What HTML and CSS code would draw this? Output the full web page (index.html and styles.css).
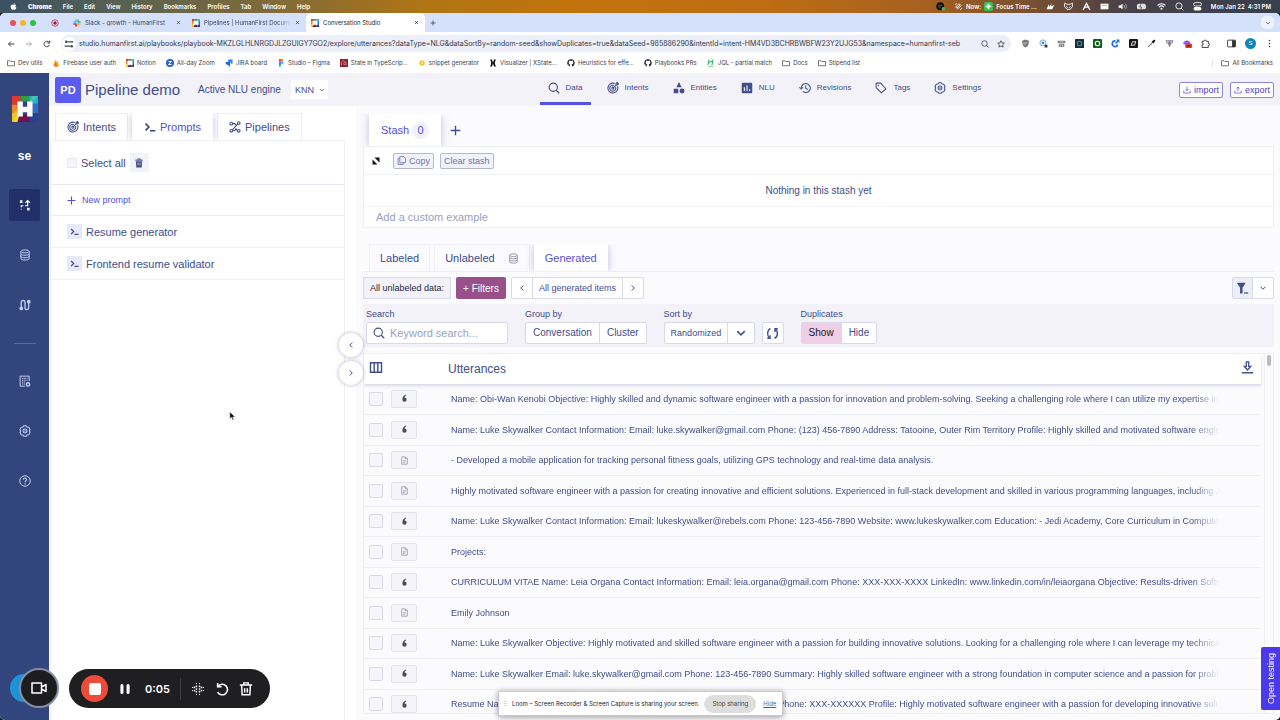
FILE: index.html
```html
<!DOCTYPE html>
<html lang="en">
<head>
  <meta charset="UTF-8" />
  <meta name="viewport" content="width=device-width, initial-scale=1.0" />
  <title>Conversation Studio</title>
  <link rel="stylesheet" href="styles.css">
</head>
<body>
  <!-- shared icons -->
  <svg class="sprite" aria-hidden="true">
    <symbol id="i-target" viewBox="0 0 16 16"><g fill="none" stroke="currentColor" stroke-width="1.4"><path d="M14 5.6A6.6 6.6 0 1 1 10.4 2"/><path d="M11.3 6.6A4 4 0 1 1 9.2 4.6"/><circle cx="7.8" cy="8.2" r="1.4"/><path d="M7.8 8.2 12 4V2l2-1.6V2.200h1.800L14 4h-2"/></g></symbol>
    <symbol id="i-prompt" viewBox="0 0 16 16"><path d="M2 3.500 6.500 8 2 12.500M8 13h7" fill="none" stroke="currentColor" stroke-width="2.200"/></symbol>
    <symbol id="i-pipe" viewBox="0 0 16 16"><g fill="none" stroke="currentColor" stroke-width="1.400"><circle cx="3" cy="3.500" r="1.800"/><circle cx="13" cy="2.800" r="1.800"/><circle cx="3" cy="13" r="1.800"/><circle cx="13" cy="13" r="1.800"/><path d="M4.800 3.500h2.700c1.500 0 1 2 2 2M11.700 4.200 4.300 11.700M4.800 13h2.400c1.500 0 .8-2.500 2.300-2.500.8 0 1 2.500 1.700 2.500"/></g></symbol>
    <symbol id="i-trash" viewBox="0 0 16 16"><path d="M2 3.500h12M6 3V1.500h4V3" fill="none" stroke="currentColor" stroke-width="1.600"/><path d="M3 5h10l-.7 10H3.700z" fill="currentColor"/><path d="M6 7.500v4M8 7.500v4M10 7.500v4" stroke="#eef" stroke-width=".8"/></symbol>
    <symbol id="i-plus" viewBox="0 0 16 16"><path d="M8 1v14M1 8h14" stroke="currentColor" stroke-width="2"/></symbol>
    <symbol id="i-search" viewBox="0 0 16 16"><path d="M15 15l-4-4" stroke="currentColor" stroke-width="1.700"/><circle cx="7" cy="7" r="5.500" fill="none" stroke="currentColor" stroke-width="1.500"/></symbol>
    <symbol id="i-shapes" viewBox="0 0 16 16"><path d="M8 0l3.500 7h-7zM1 9h6v6H1z" fill="currentColor"/><circle cx="12" cy="12" r="3.300" fill="currentColor"/></symbol>
    <symbol id="i-chart" viewBox="0 0 16 16"><rect x="1" y="1" width="14" height="14" rx="1.500" fill="currentColor"/><path d="M4.500 12V7M8 12V4.500M11.500 12V9.500" stroke="#f3f3f9" stroke-width="1.500"/></symbol>
    <symbol id="i-history" viewBox="0 0 16 16"><path d="M3 8a6 6 0 1 1 2 4.500M.5 7 3 9.500 5.500 7M9 4.500V8.500l2.700 1.600" fill="none" stroke="currentColor" stroke-width="1.400"/></symbol>
    <symbol id="i-tag" viewBox="0 0 16 16"><path d="M1.500 2v5.500l7 7 6-5.500-7-7.500H2z" fill="none" stroke="currentColor" stroke-width="1.400" stroke-linejoin="round"/><circle cx="4.500" cy="4.500" r="1" fill="currentColor"/></symbol>
    <symbol id="i-gear" viewBox="0 0 16 16"><g fill="none" stroke="currentColor" stroke-width="1.400"><path d="M6.300 1h3.400l1 1.800 2.300.2 1.700 2.900L13.700 8l1 2.100L13 13l-2.300.2-1 1.800H6.300l-1-1.800L3 13l-1.700-2.900L2.300 8l-1-2.100L3 3l2.300-.2z" stroke-linejoin="round"/><circle cx="8" cy="8" r="2.600"/></g><circle cx="8" cy="8" r="1" fill="currentColor"/></symbol>
    <symbol id="i-down" viewBox="0 0 16 16"><path d="M8 1v8M5 6.500 8 9.500l3-3M1.500 9v5h13V9" fill="none" stroke="currentColor" stroke-width="1.300"/></symbol>
    <symbol id="i-up" viewBox="0 0 16 16"><path d="M8 10V2M5 5l3-3 3 3M1.500 9v5h13V9" fill="none" stroke="currentColor" stroke-width="1.300"/></symbol>
    <symbol id="i-db" viewBox="0 0 16 16"><g fill="none" stroke="currentColor" stroke-width="1.300"><ellipse cx="8" cy="3.200" rx="5.500" ry="2"/><path d="M2.500 3.200v9.600c0 2.600 11 2.600 11 0V3.200M2.500 6.500c0 2.500 11 2.500 11 0M2.500 9.800c0 2.500 11 2.500 11 0"/></g></symbol>
    <symbol id="i-chev-d" viewBox="0 0 16 16"><path d="M3 5.500 8 10.500l5-5" fill="none" stroke="currentColor" stroke-width="2"/></symbol>
    <symbol id="i-chev-l" viewBox="0 0 16 16"><path d="M10.500 3l-5 5 5 5" fill="none" stroke="currentColor" stroke-width="2"/></symbol>
    <symbol id="i-chev-r" viewBox="0 0 16 16"><path d="M5.500 3l5 5-5 5" fill="none" stroke="currentColor" stroke-width="2"/></symbol>
    <symbol id="i-folder" viewBox="0 0 16 16"><path d="M1 3.500h5l1.500 1.500H15v8.500H1z" fill="none" stroke="currentColor" stroke-width="1.400" stroke-linejoin="round"/></symbol>
    <symbol id="i-x" viewBox="0 0 16 16"><path d="M3 3l10 10M13 3 3 13" stroke="currentColor" stroke-width="2.200"/></symbol>
    <symbol id="i-git" viewBox="0 0 16 16"><path d="M8 .5a7.500 7.500 0 0 0-2.400 14.600c.4 0 .5-.2.500-.4v-2C4 13 3.500 11.800 3.300 11.400 3 11 2.600 10.700 2.500 10.500c1.200-.3 1.600 1.200 2.300 1.400.6.200 1.200 0 1.400-.1 0-.5.300-.8.500-1-2-.2-3.400-1-3.400-3.600 0-.8.300-1.500.8-2-.1-.3-.3-1.200.1-2 0 0 .7-.2 2 .8 1.300-.4 2.500-.4 3.700 0 1.300-1 2-.8 2-.8.400.8.200 1.700.1 2 .5.500.8 1.200.8 2 0 2.600-1.500 3.400-3.400 3.600.3.300.6.800.6 1.500v2.300c0 .2.100.500.500.4A7.500 7.500 0 0 0 8 .5z" fill="#1b1b20"/></symbol>
    <symbol id="i-quote" viewBox="0 0 16 16"><path d="M10.500 1C7 2 4.200 5.500 4.200 10a3.800 3.800 0 1 0 4-3.800C8.300 4.500 9.300 3 11.200 2.200z" fill="#4a4d5e"/></symbol>
    <symbol id="i-doc" viewBox="0 0 16 16"><path d="M3 1.500h6.500l3.500 3.500v9.500H3zM9.500 1.500V5H13M5.300 8.500h5.400M5.300 11.300h3.700" fill="none" stroke="#8a8da0" stroke-width="1.300"/></symbol>
    <symbol id="i-hf" viewBox="0 0 24 24"><path d="M0 0h8v8H0z" fill="#e03a2f"/><path d="M8 0h8v5H8z" fill="#2f9e48"/><path d="M16 0h8v8h-5v-3h-3z" fill="#1db3dc"/><path d="M24 0l-5 5h-3l3-5z" fill="#4cc3a5"/><path d="M0 8h5v8H0z" fill="#f08a24"/><path d="M19 7h5v9h-5z" fill="#2e6fc9"/><path d="M0 16h8v8H0z" fill="#f6d32d"/><path d="M7 17h10v7H5z" fill="#6d1450"/><path d="M16 16h8v8h-7z" fill="#2a3f8f"/><path d="M0 24 5 17 4 13l-4 5z" fill="#e9c52e"/><path d="M5 5h5v5h4V5h5v14h-5v-4h-4v4H5z" fill="#fff"/></symbol>
  </svg>

  <header class="menubar">
    <svg class="apple" viewBox="0 0 16 16"><path d="M11 0c0 2-1.500 3.500-3 3.500C8 1.800 9.500.300 11 0zM8 4.500c.8 0 1.700-1 3.300-1 1 0 2 .5 2.700 1.500-2.500 1.500-2 5 .6 6-.8 2.300-2 4.500-3.600 4.500-1 0-1.400-.7-2.700-.7s-1.700.7-2.700.7C3.500 15.500 1.500 12 1.500 8.700c0-3.300 2-5.200 4-5.200 1.200 0 2 1 2.500 1z" fill="#fff"/></svg>
    <strong>Chrome</strong><span>File</span><span>Edit</span><span>View</span><span>History</span><span>Bookmarks</span><span>Profiles</span><span>Tab</span><span>Window</span><span>Help</span>
    <div class="menu-right">
      <svg viewBox="0 0 16 16"><circle cx="7.500" cy="7.500" r="7" fill="#111"/><path d="M4 6h7M4 9h5" stroke="#888"/><circle cx="13" cy="12" r="3" fill="#35c759"/></svg>
      <span class="now"><svg viewBox="0 0 16 16"><path d="M3 9 9 3l2 2-6 6zM6 13l7-7M2 5l3-3M11 14l3-3" fill="none" stroke="#fff" stroke-width="1.600"/></svg> Now: <svg viewBox="0 0 16 16"><rect width="16" height="16" rx="3" fill="#2fc44b"/><path d="M8 3v10M3 8h10" stroke="#fff" stroke-width="3"/></svg> Focus Time ...</span>
      <svg viewBox="0 0 16 16"><path d="M1 13 5 4l1 5 4-7-1 6 6-3-4 8z" fill="#fff"/></svg>
      <svg viewBox="0 0 16 16"><path d="M1 2l4 2h6l4-2v6l-4 5H5L1 8zM4 8l3 2M12 8l-3 2" fill="none" stroke="#fff" stroke-width="1.500"/></svg>
      <svg viewBox="0 0 16 16"><path d="M2 14 8 2l6 12M5 9h8" fill="none" stroke="#fff" stroke-width="2"/></svg>
      <svg viewBox="0 0 16 16"><path d="M1 3h14v10H1z" fill="#fff"/><path d="M3 6h10" stroke="#966"/></svg>
      <svg viewBox="0 0 16 16"><path d="M1 6h3l4-3v10l-4-3H1z" fill="#fff"/><path d="M10 5c1.500 2 1.500 4 0 6M13 3c2.500 3 2.500 7 0 10" fill="none" stroke="#ccc" stroke-width="1.300"/></svg>
      <svg class="wide" viewBox="0 0 20 16"><rect x="1" y="3" width="16" height="10" rx="3" fill="#ddd"/><path d="M8 4l-2 5h3l-1 4M19 6v4" fill="none" stroke="#555" stroke-width="1.500"/></svg>
      <svg viewBox="0 0 16 16"><path d="M1 6c4-4 10-4 14 0M3.500 9c3-3 6-3 9 0" fill="none" stroke="#fff" stroke-width="2"/><circle cx="8" cy="12" r="1.800" fill="#fff"/></svg>
      <svg><use href="#i-search"/></svg>
      <svg viewBox="0 0 16 16"><rect x="1" y="1" width="14" height="6" rx="3" fill="none" stroke="#fff" stroke-width="1.500"/><rect x="1" y="9" width="14" height="6" rx="3" fill="#fff"/></svg>
      <span>Mon Jan 22&nbsp; 4:31 PM</span>
    </div>
  </header>

  <div class="browser">
    <div class="tabstrip">
      <div class="lights"><i></i><i></i><i></i></div>
      <svg class="ico rec" viewBox="0 0 16 16"><circle cx="8" cy="8" r="6.500" fill="#f6d9e4" stroke="#a03060" stroke-width="1.500"/><circle cx="8" cy="8" r="3.500" fill="#a01f4a"/></svg>
      <div class="tab">
        <svg class="ico" viewBox="0 0 16 16"><g stroke-width="3" stroke-linecap="round"><path d="M6 2v4M2 6h4" stroke="#36c5f0"/><path d="M10 2v4M10 6h4" stroke="#2eb67d"/><path d="M10 10v4M10 10h4" stroke="#ecb22e"/><path d="M2 10h4M6 10v4" stroke="#e01e5a"/></g></svg>
        <span>Slack - growth - HumanFirst</span>
        <button class="plain" aria-label="Close tab"><svg><use href="#i-x"/></svg></button>
      </div>
      <div class="tab">
        <svg class="ico"><use href="#i-hf"/></svg>
        <span class="fade">Pipelines | HumanFirst Documentation</span>
        <button class="plain" aria-label="Close tab"><svg><use href="#i-x"/></svg></button>
      </div>
      <div class="tab active">
        <svg class="ico"><use href="#i-hf"/></svg>
        <span>Conversation Studio</span>
        <button class="plain" aria-label="Close tab"><svg><use href="#i-x"/></svg></button>
      </div>
      <button class="plain newtab" aria-label="New tab"><svg><use href="#i-plus"/></svg></button>
      <button class="plain tabsearch" aria-label="Search tabs"><svg><use href="#i-chev-d"/></svg></button>
    </div>

    <div class="toolbar">
      <button class="plain" aria-label="Back"><svg viewBox="0 0 16 16"><path d="M15 8H3M8 3 3 8l5 5" fill="none" stroke="#444" stroke-width="2"/></svg></button>
      <button class="plain" aria-label="Forward"><svg viewBox="0 0 16 16"><path d="M1 8h12M8 3l5 5-5 5" fill="none" stroke="#aaa" stroke-width="2"/></svg></button>
      <button class="plain" aria-label="Reload"><svg viewBox="0 0 16 16"><path d="M13 9.500A5.500 5.500 0 1 1 12 4.500M13.500 1v5h-5" fill="none" stroke="#444" stroke-width="2"/></svg></button>
      <div class="address">
        <svg class="site" viewBox="0 0 16 16"><circle cx="8" cy="8" r="8" fill="#fff"/><path d="M7 5.500h6M3 10.500h6" stroke="#444" stroke-width="1.500"/><circle cx="5" cy="5.500" r="1.500" fill="#444"/><circle cx="11" cy="10.500" r="1.500" fill="#444"/></svg>
        <input type="text" aria-label="Address" value="studio.humanfirst.ai/playbooks/playbook-MKZLGLHLNRGDJLZGUIGY7GO2/explore/utterances?dataType=NLG&amp;dataSortBy=random-seed&amp;showDuplicates=true&amp;dataSeed=985886290&amp;intentId=intent-HM4VD3BCHRBWBFW23Y2UJG53&amp;namespace=humanfirst-seb">
        <svg><use href="#i-search"/></svg>
        <svg viewBox="0 0 16 16"><path d="M8 1.500l2 4.300 4.700.5-3.500 3.200 1 4.700L8 11.800l-4.200 2.400 1-4.700L1.300 6.300 6 5.800z" fill="none" stroke="#333" stroke-width="1.500"/></svg>
      </div>
      <div class="extensions">
        <svg viewBox="0 0 16 16"><path d="M8 1l6 2c0 6-1 10-6 12C3 13 2 9 2 3z" fill="#777"/><path d="M5 6v3h3V6h3" fill="none" stroke="#ddd"/></svg>
        <svg viewBox="0 0 16 16"><circle cx="7" cy="7" r="5.500" fill="#d7ecf7" stroke="#88a8c0" stroke-width="1.500"/><circle cx="7" cy="7" r="2" fill="#2e86c1"/><path d="M10 10h5v5h-5z" fill="#333a55"/></svg>
        <svg viewBox="0 0 16 16"><path d="M1 3h14v4H1zM3 8h10v6H3z" fill="#888"/><path d="M6 3v11M10 3v11" stroke="#ccc"/></svg>
        <svg viewBox="0 0 16 16"><rect width="16" height="16" rx="1" fill="#1d2833"/><circle cx="8" cy="8" r="4" fill="none" stroke="#16a6a8" stroke-width="2"/></svg>
        <svg viewBox="0 0 16 16"><rect width="16" height="16" rx="2" fill="#0d5c1c"/><circle cx="8" cy="8" r="4" fill="none" stroke="#fff" stroke-width="2"/></svg>
        <svg viewBox="0 0 16 16"><path d="M12 10A5 5 0 1 1 8 3.500" fill="none" stroke="#1473e6" stroke-width="3"/><path d="M9 1h6v6l-2-2-4 4-2-2 4-4z" fill="#1473e6"/></svg>
        <svg viewBox="0 0 16 16"><rect width="16" height="16" rx="2" fill="#16161a"/><path d="M4 12l2-7h6M12 4l-2 7H4" fill="none" stroke="#fff" stroke-width="1.500"/></svg>
        <svg viewBox="0 0 16 16"><path d="M2 14 9 7" stroke="#777" stroke-width="2"/><path d="M8 5l5-4 2 2-4 5z" fill="#111"/></svg>
        <svg viewBox="0 0 16 16"><path d="M1 2h14l-2 6H3zM5 8h6l-3 7z" fill="#8b7a9c"/><circle cx="5" cy="5" r="1.500" fill="#ddd"/><circle cx="11" cy="5" r="1.500" fill="#ddd"/></svg>
        <svg viewBox="0 0 16 16"><path d="M0 9a7 7 0 0 1 13-3l-3 5z" fill="#8b5cf6"/><rect x="4" y="8" width="12" height="8" rx="2" fill="#d63a31"/><path d="M7 12h6" stroke="#611" stroke-width="2"/></svg>
        <svg viewBox="0 0 16 16"><path d="M2 4h3.500a2 2 0 1 1 4 0H13v3.500a2 2 0 1 1 0 4V15H2v-4a2 2 0 0 0 0-4z" fill="none" stroke="#333" stroke-width="1.600"/></svg>
        <svg class="ml" viewBox="0 0 16 16"><rect x="1" y="2" width="14" height="12" rx="1" fill="none" stroke="#333" stroke-width="1.600"/><path d="M9 2h6v12H9z" fill="#333"/></svg>
        <span class="avatar">S</span>
        <svg viewBox="0 0 16 16"><g fill="#333"><circle cx="8" cy="2.500" r="1.300"/><circle cx="8" cy="8" r="1.300"/><circle cx="8" cy="13.500" r="1.300"/></g></svg>
      </div>
    </div>

    <nav class="bookmarks" aria-label="Bookmarks">
      <a href="#"><svg><use href="#i-folder"/></svg>Dev utils</a>
      <a href="#"><svg viewBox="0 0 16 16"><path d="M3 13 6 1l3 5 2-3 3 10-6 3z" fill="#f7a91b"/><path d="M3 13l4-6 4 8-3 1z" fill="#f4731c"/></svg>Firebase user auth</a>
      <a href="#"><svg><use href="#i-hf"/></svg>Notion</a>
      <a href="#"><svg viewBox="0 0 16 16"><circle cx="8" cy="8" r="8" fill="#2463d8"/><path d="M5 5h6l-6 6h6" fill="none" stroke="#fff" stroke-width="2"/></svg>All-day Zoom</a>
      <a href="#"><svg viewBox="0 0 16 16"><path d="M6 1h9v9c-2 0-3-1-3-3H9c-2 0-3-1-3-6z" fill="#2684ff"/><path d="M1 6h9v9c-2 0-3-1-3-3-5 0-6-3-6-6z" fill="#1868db"/></svg>JIRA board</a>
      <a href="#"><svg viewBox="0 0 16 16"><path d="M4 0h4v5H4z" fill="#f24e1e"/><path d="M8 0h4v5H8z" fill="#ff7262"/><path d="M4 5h4v5H4z" fill="#a259ff"/><circle cx="10.500" cy="7.500" r="2.500" fill="#1abcfe"/><path d="M4 10h4v3a2.500 2.500 0 0 1-4 2z" fill="#0acf83"/></svg>Studio – Figma</a>
      <a href="#"><svg viewBox="0 0 16 16"><rect width="16" height="16" fill="#8d1f2b"/><path d="M3 13V6l4-3 5 4v6M6 8h4M7 11h3" fill="none" stroke="#e5a3a3" stroke-width="1.500"/></svg>State in TypeScrip...</a>
      <a href="#"><svg viewBox="0 0 16 16"><circle cx="8" cy="8" r="5.500" fill="#f4c430"/><circle cx="8" cy="8" r="2" fill="#fbe79a"/></svg>snippet generator</a>
      <a href="#"><svg viewBox="0 0 16 16"><path d="M2 1h4c1 4 2 5 2 7s-1 3-2 7H2c3-5 3-9 0-14zM14 1h-4C9 5 8 6 8 8s1 3 2 7h4c-3-5-3-9 0-14z" fill="#111"/></svg>Visualizer | XState...</a>
      <a href="#"><svg><use href="#i-git"/></svg>Heuristics for effe...</a>
      <a href="#"><svg><use href="#i-git"/></svg>Playbooks PRs</a>
      <a href="#"><svg viewBox="0 0 16 16"><path d="M4 1 2 12M12 1l-2 11M3 7l9-3" stroke="#27a35a" stroke-width="2"/><path d="M2 15h11" stroke="#27a35a"/></svg>JQL - partial match</a>
      <a href="#"><svg><use href="#i-folder"/></svg>Docs</a>
      <a href="#"><svg><use href="#i-folder"/></svg>Stipend list</a>
      <a href="#" class="all"><svg><use href="#i-folder"/></svg>All Bookmarks</a>
    </nav>

    <div class="app">
      <aside class="rail">
        <a href="#" aria-label="Home"><svg class="logo"><use href="#i-hf"/></svg></a>
        <span class="space">se</span>
        <nav aria-label="Sections">
          <a href="#" class="on" aria-label="Studio"><svg viewBox="0 0 16 16"><path d="M1.500 2l3 3M4.500 2l-3 3M11 12l3 3M14 12l-3 3M3 14v-1M3 11V9h3M8 9h3.500V3M8.500 5l3-3 3 3" fill="none" stroke="currentColor" stroke-width="1.600"/></svg></a>
          <a href="#" aria-label="Data"><svg><use href="#i-db"/></svg></a>
          <a href="#" aria-label="Pipelines"><svg viewBox="0 0 16 16"><path d="M3 12V4.500a2.500 2.500 0 0 1 5 0v7a2.500 2.500 0 0 0 5 0V4" fill="none" stroke="currentColor" stroke-width="1.700"/><circle cx="3" cy="12.500" r="2.500" fill="currentColor"/><circle cx="13" cy="3.500" r="2.500" fill="currentColor"/></svg></a>
        </nav>
        <hr>
        <nav aria-label="Workspace">
          <a href="#" aria-label="Organization"><svg viewBox="0 0 16 16"><path d="M8 15H1.500V1.500h12V8" fill="none" stroke="currentColor" stroke-width="1.300"/><path d="M4 4.500h7.500M4 7h7.500M4 9.500h4M4 12h4" stroke="currentColor" stroke-width="1.300" stroke-dasharray="1.500 .8"/><circle cx="12" cy="12.500" r="2.200" fill="none" stroke="currentColor" stroke-width="1.800"/></svg></a>
          <a href="#" aria-label="Settings"><svg><use href="#i-gear"/></svg></a>
          <a href="#" aria-label="Help"><svg viewBox="0 0 16 16"><circle cx="8" cy="8" r="7" fill="none" stroke="currentColor" stroke-width="1.300"/><path d="M5.800 6.200c.2-3 4.500-2.500 4.300 0C10 7.800 8 7.700 8 9.600M8 11v1.500" fill="none" stroke="currentColor" stroke-width="1.400"/></svg></a>
        </nav>
      </aside>

      <div class="page">
        <header class="topbar">
          <span class="badge">PD</span>
          <h1>Pipeline demo</h1>
          <label for="engine">Active NLU engine</label>
          <span class="select engine"><select id="engine"><option>KNN</option></select><svg><use href="#i-chev-d"/></svg></span>
          <nav class="views" aria-label="Views">
            <a href="#" class="on"><svg><use href="#i-search"/></svg>Data</a>
            <a href="#"><svg><use href="#i-target"/></svg>Intents</a>
            <a href="#"><svg><use href="#i-shapes"/></svg>Entities</a>
            <a href="#"><svg><use href="#i-chart"/></svg>NLU</a>
            <a href="#"><svg><use href="#i-history"/></svg>Revisions</a>
            <a href="#"><svg><use href="#i-tag"/></svg>Tags</a>
            <a href="#"><svg><use href="#i-gear"/></svg>Settings</a>
          </nav>
          <div class="io">
            <button><svg><use href="#i-down"/></svg>import</button>
            <button><svg><use href="#i-up"/></svg>export</button>
          </div>
        </header>

        <div class="columns">
          <section class="left">
            <div class="tabs">
              <button><svg><use href="#i-target"/></svg>Intents</button>
              <button class="on"><svg><use href="#i-prompt"/></svg>Prompts</button>
              <button><svg><use href="#i-pipe"/></svg>Pipelines</button>
            </div>
            <div class="prompts">
              <div class="select-all">
                <input type="checkbox" id="all"><label for="all">Select all</label>
                <button class="delete" aria-label="Delete"><svg><use href="#i-trash"/></svg></button>
              </div>
              <button class="new"><svg><use href="#i-plus"/></svg>New prompt</button>
              <a href="#" class="prompt"><svg><use href="#i-prompt"/></svg>Resume generator</a>
              <a href="#" class="prompt"><svg><use href="#i-prompt"/></svg>Frontend resume validator</a>
            </div>
            <div class="collapse">
              <button aria-label="Collapse left"><svg><use href="#i-chev-l"/></svg></button>
              <button aria-label="Collapse right"><svg><use href="#i-chev-r"/></svg></button>
            </div>
          </section>

          <main class="right">
            <div class="stash-tabs">
              <button class="on">Stash <span class="count">0</span></button>
              <button class="plain add" aria-label="Add stash"><svg><use href="#i-plus"/></svg></button>
            </div>
            <section class="stash">
              <div class="stash-tools">
                <button class="plain" aria-label="Expand"><svg viewBox="0 0 16 16"><path d="M5 1h10v10zM1 5v10h10z" fill="#111"/></svg></button>
                <button class="small"><svg viewBox="0 0 16 16"><path d="M5 1h7l3 3v8H5zM5 4H2v11h9v-3" fill="none" stroke="currentColor" stroke-width="1.500"/></svg>Copy</button>
                <button class="small">Clear stash</button>
              </div>
              <p>Nothing in this stash yet</p>
              <input type="text" placeholder="Add a custom example" aria-label="Add a custom example">
            </section>

            <div class="data-tabs">
              <button>Labeled</button>
              <button>Unlabeled <svg><use href="#i-db"/></svg></button>
              <button class="on">Generated</button>
            </div>
            <div class="scope">
              <span class="what">All unlabeled data:</span>
              <button class="filters">+ Filters</button>
              <div class="group">
                <button aria-label="Previous"><svg><use href="#i-chev-l"/></svg></button>
                <button>All generated items</button>
                <button aria-label="Next"><svg><use href="#i-chev-r"/></svg></button>
              </div>
              <div class="group end">
                <button class="tint" aria-label="Filter"><svg class="funnel" viewBox="0 0 16 16"><path d="M1 1h11L8 7v7H5V7z" fill="currentColor"/><path d="M10 13.500h5" stroke="currentColor" stroke-width="1.500"/></svg></button>
                <button aria-label="Filter options"><svg><use href="#i-chev-d"/></svg></button>
              </div>
            </div>

            <form class="band">
              <div class="field search">
                <label for="q">Search</label>
                <div class="box"><svg><use href="#i-search"/></svg><input id="q" type="text" placeholder="Keyword search..."></div>
              </div>
              <div class="field">
                <span>Group by</span>
                <div class="group big"><button type="button">Conversation</button><button type="button">Cluster</button></div>
              </div>
              <div class="field">
                <label for="sort">Sort by</label>
                <div class="sort-row">
                  <span class="select order"><select id="sort"><option>Randomized</option></select><svg><use href="#i-chev-d"/></svg></span>
                  <button type="button" class="shuffle" aria-label="Shuffle"><svg viewBox="0 0 16 16"><path d="M5.500 2C1 4 1 11 4.500 13.500M1.500 13.800h3.500V10M10.500 14c4.500-2 4.500-9 1-11.500M14.500 2.200H11V6" fill="none" stroke="currentColor" stroke-width="1.700"/></svg></button>
                </div>
              </div>
              <div class="field">
                <span>Duplicates</span>
                <div class="group big"><button type="button" class="pink">Show</button><button type="button">Hide</button></div>
              </div>
            </form>

            <div class="list">
              <table>
                <thead>
                  <tr>
                    <th class="c1"><svg viewBox="0 0 16 14"><path d="M1 1h14v12H1zM5.700 1v12M10.300 1v12" fill="none" stroke="currentColor" stroke-width="1.800"/></svg></th>
                    <th class="c2"></th>
                    <th>Utterances</th>
                    <th class="c4"><button class="plain" aria-label="Download"><svg viewBox="0 0 16 16"><path d="M6.500 1h3v5.500H12L8 11 4 6.500h2.500z" fill="none" stroke="currentColor" stroke-width="1.600"/><path d="M1 14.500h14" stroke="currentColor" stroke-width="1.800"/></svg></button></th>
                  </tr>
                </thead>
                <tbody>
                  <tr><td><input type="checkbox" aria-label="Select row 1"></td><td><span class="kind"><svg><use href="#i-quote"/></svg></span></td><td colspan="2"><div class="text">Name: Obi-Wan Kenobi Objective: Highly skilled and dynamic software engineer with a passion for innovation and problem-solving. Seeking a challenging role where I can utilize my expertise in</div></td></tr>
                  <tr><td><input type="checkbox" aria-label="Select row 2"></td><td><span class="kind"><svg><use href="#i-quote"/></svg></span></td><td colspan="2"><div class="text">Name: Luke Skywalker Contact Information: Email: luke.skywalker@gmail.com Phone: (123) 456-7890 Address: Tatooine, Outer Rim Territory Profile: Highly skilled and motivated software engineer</div></td></tr>
                  <tr><td><input type="checkbox" aria-label="Select row 3"></td><td><span class="kind"><svg><use href="#i-doc"/></svg></span></td><td colspan="2"><div class="text">- Developed a mobile application for tracking personal fitness goals, utilizing GPS technology and real-time data analysis.</div></td></tr>
                  <tr><td><input type="checkbox" aria-label="Select row 4"></td><td><span class="kind"><svg><use href="#i-doc"/></svg></span></td><td colspan="2"><div class="text">Highly motivated software engineer with a passion for creating innovative and efficient solutions. Experienced in full-stack development and skilled in various programming languages, including Java</div></td></tr>
                  <tr><td><input type="checkbox" aria-label="Select row 5"></td><td><span class="kind"><svg><use href="#i-quote"/></svg></span></td><td colspan="2"><div class="text">Name: Luke Skywalker Contact Information: Email: lukeskywalker@rebels.com Phone: 123-456-7890 Website: www.lukeskywalker.com Education: - Jedi Academy, Core Curriculum in Computer</div></td></tr>
                  <tr><td><input type="checkbox" aria-label="Select row 6"></td><td><span class="kind"><svg><use href="#i-doc"/></svg></span></td><td colspan="2"><div class="text">Projects:</div></td></tr>
                  <tr><td><input type="checkbox" aria-label="Select row 7"></td><td><span class="kind"><svg><use href="#i-quote"/></svg></span></td><td colspan="2"><div class="text">CURRICULUM VITAE Name: Leia Organa Contact Information: Email: leia.organa@gmail.com Phone: XXX-XXX-XXXX LinkedIn: www.linkedin.com/in/leiaorgana Objective: Results-driven Software</div></td></tr>
                  <tr><td><input type="checkbox" aria-label="Select row 8"></td><td><span class="kind"><svg><use href="#i-doc"/></svg></span></td><td colspan="2"><div class="text">Emily Johnson</div></td></tr>
                  <tr><td><input type="checkbox" aria-label="Select row 9"></td><td><span class="kind"><svg><use href="#i-quote"/></svg></span></td><td colspan="2"><div class="text">Name: Luke Skywalker Objective: Highly motivated and skilled software engineer with a passion for building innovative solutions. Looking for a challenging role where I can leverage my technical</div></td></tr>
                  <tr><td><input type="checkbox" aria-label="Select row 10"></td><td><span class="kind"><svg><use href="#i-quote"/></svg></span></td><td colspan="2"><div class="text">Name: Luke Skywalker Email: luke.skywalker@gmail.com Phone: 123-456-7890 Summary: Highly skilled software engineer with a strong foundation in computer science and a passion for problem</div></td></tr>
                  <tr><td><input type="checkbox" aria-label="Select row 11"></td><td><span class="kind"><svg><use href="#i-quote"/></svg></span></td><td colspan="2"><div class="text">Resume Name: Luke Skywalker Contact Information: Email: lukesky@rebels.com Phone: XXX-XXXXXX Profile: Highly motivated software engineer with a passion for developing innovative solutions</div></td></tr>
                </tbody>
              </table>
              <div class="scrollbar"><i></i></div>
            </div>
          </main>
        </div>
      </div>
    </div>
  </div>

  <!-- things floating over the page -->
  <button class="testing">Open testing</button>
  <div class="share">
    <span class="grip">⠿</span>
    <span>Loom – Screen Recorder &amp; Screen Capture is sharing your screen.</span>
    <button>Stop sharing</button>
    <a href="#">Hide</a>
  </div>
  <div class="bubble"></div>
  <button class="camera" aria-label="Camera"><svg viewBox="0 0 16 12"><path d="M1 1h9.500v10H1zM10.500 5 15 2.500v7L10.500 7" fill="none" stroke="#fff" stroke-width="1.500" stroke-linejoin="round"/></svg></button>
  <div class="recorder">
    <button class="stop" aria-label="Stop"><i></i></button>
    <button class="plain" aria-label="Pause"><svg viewBox="0 0 16 16"><path d="M4.500 4v8M11.500 4v8" stroke="#fff" stroke-width="3.500" stroke-linecap="round"/></svg></button>
    <span class="time">0:05</span>
    <span class="sep"></span>
    <button class="plain" aria-label="Effects"><svg viewBox="0 0 18 18"><g fill="none" stroke="#fff" stroke-width="1.500" stroke-linecap="round"><path d="M7 2h.01M11 2h.01M7 16h.01M11 16h.01M2 7h.01M16 7h.01M2 11h.01M16 11h.01"/><path d="M7 5.500h.01M11 5.500h.01M7 9h.01M11 9h.01M7 12.500h.01M11 12.500h.01M4.500 7h.01M13.500 7h.01M4.500 11h.01M13.500 11h.01" stroke-width="2.200"/></g></svg></button>
    <button class="plain" aria-label="Restart"><svg viewBox="0 0 16 16"><path d="M3.500 5A6 6 0 1 1 3 11.500M3 1v4.500h4.500" fill="none" stroke="#fff" stroke-width="1.800"/></svg></button>
    <button class="plain" aria-label="Discard"><svg viewBox="0 0 16 16"><path d="M1 3.500h14M5.500 3V1h5v2M3 4l.6 10.500h8.800L13 4M6.500 7v5M9.500 7v5" fill="none" stroke="#fff" stroke-width="1.700"/></svg></button>
  </div>
  <svg class="cursor" viewBox="0 0 10 14"><path d="M1 1v10l2.500-2 1.700 4 1.800-.8-1.700-3.700H9z" fill="#111" stroke="#fff" stroke-width=".8"/></svg>
</body>
</html>
```
FILE: styles.css
```css
* {
  box-sizing: border-box;
  margin: 0;
  padding: 0;
}
body {
  display: flex;
  flex-direction: column;
  height: 100vh;
  overflow: hidden;
  background-color: #1b1b22;
  color: #424d8a;
  font-family: "Liberation Sans", Arial, sans-serif;
  font-size: 11px;
}
button, input, select {
  font: inherit;
  color: inherit;
}
button {
  display: inline-flex;
  align-items: center;
  justify-content: center;
  border: none;
  background: none;
  white-space: nowrap;
}
a {
  color: inherit;
  text-decoration: none;
}
svg {
  display: block;
  flex: none;
  width: 10px;
  height: 10px;
}
.sprite {
  position: absolute;
  width: 0;
  height: 0;
}

/* menu bar */
.menubar {
  display: flex;
  flex: none;
  align-items: center;
  gap: 11px;
  height: 13px;
  padding: 0 9px 1px 10px;
  background: linear-gradient(90deg, #3a5263, #5d6350 11%, #8b6c32 24%, #b07514 33%, #c3730c 45%, #bd6d12 60%, #a7601f 72%, #7b5030 80%, #494048 88%, #36404f);
  color: #fff;
  font-family: Inter, sans-serif;
  font-size: 6px;
  font-weight: 600;
}
.menubar svg {
  width: 9px;
  height: 9px;
}
.menubar svg.apple {
  width: 7px;
  height: 7px;
}
.menu-right {
  display: flex;
  align-items: center;
  gap: 9px;
  margin-left: auto;
}
.menu-right svg.wide {
  width: 12px;
}
.now {
  display: flex;
  align-items: center;
  gap: 3px;
}

/* browser frame */
.browser {
  display: flex;
  flex: 1;
  flex-direction: column;
  min-height: 0;
  overflow: hidden;
  border-radius: 5px;
  background-color: #fff;
}
.tabstrip {
  display: flex;
  align-items: center;
  height: 19px;
  padding: 0 6px 0 10px;
  background-color: #d5e1fa;
  color: #3c4257;
  font-family: Inter, sans-serif;
  font-size: 6px;
}
.lights {
  display: flex;
  gap: 4px;
}
.lights i {
  width: 6px;
  height: 6px;
  border-radius: 50%;
  background-color: #ee4d5c;
}
.lights i:nth-child(2) {
  background-color: #f3b62e;
}
.lights i:nth-child(3) {
  background-color: #2fc43f;
}
.rec {
  margin: 0 9px 0 15px;
}
.ico {
  width: 8px;
  height: 8px;
}
.tab {
  display: flex;
  align-items: center;
  gap: 4px;
  width: 119px;
  height: 19px;
  padding: 0 6px 0 5px;
}
.tab span {
  flex: 1;
  overflow: hidden;
  white-space: nowrap;
}
.tab svg:not(.ico) {
  width: 5px;
  height: 5px;
}
.tab .fade {
  mask-image: linear-gradient(90deg, #000 85%, transparent);
}
.tab.active {
  border-radius: 5px 5px 0 0;
  background-color: #fff;
  color: #1f1f28;
}
.newtab svg {
  width: 6px;
  height: 6px;
  margin-left: 5px;
}
.tabsearch {
  width: 13px;
  height: 13px;
  margin-left: auto;
  border-radius: 5px;
  background-color: #edf2fd;
}
.tabsearch svg {
  width: 6px;
  height: 6px;
}
.toolbar {
  display: flex;
  align-items: center;
  gap: 10px;
  height: 23px;
  padding: 0 6px 0 7px;
}
.toolbar > button svg {
  width: 8px;
  height: 8px;
}
.address {
  display: flex;
  flex: 1;
  align-items: center;
  gap: 8px;
  height: 17px;
  padding: 0 6px 0 1px;
  border-radius: 9px;
  background-color: #eceef8;
  color: #333947;
}
.address svg {
  width: 8px;
  height: 8px;
}
.address .site {
  width: 14px;
  height: 14px;
  margin-right: -5px;
}
.address input {
  flex: 1;
  min-width: 0;
  border: none;
  background: none;
  font-family: Inter, sans-serif;
  font-size: 7px;
}
.extensions {
  display: flex;
  align-items: center;
  gap: 9px;
}
.extensions svg {
  width: 9px;
  height: 9px;
}
.extensions .ml {
  margin-left: 8px;
}
.avatar {
  width: 11px;
  height: 11px;
  border-radius: 50%;
  background-color: #1386b8;
  color: #fff;
  font-size: 6px;
  line-height: 11px;
  text-align: center;
}
.bookmarks {
  display: flex;
  align-items: center;
  gap: 10px;
  height: 18px;
  padding: 0 7px 3px;
  color: #3c4048;
  font-family: Inter, sans-serif;
  font-size: 6px;
  white-space: nowrap;
}
.bookmarks a {
  display: flex;
  align-items: center;
  gap: 3px;
}
.bookmarks svg {
  width: 8px;
  height: 8px;
}
.bookmarks .all {
  margin-left: auto;
  padding-left: 8px;
  border-left: 1px solid #e3e6ee;
}

/* left rail */
.app {
  display: flex;
  flex: 1;
  min-height: 0;
}
.rail {
  display: flex;
  flex: none;
  flex-direction: column;
  align-items: center;
  width: 49px;
  padding-top: 22px;
  background-color: #33457d;
  color: #c5cdf5;
}
.logo {
  width: 26px;
  height: 28px;
}
.space {
  margin: 26px 0;
  color: #fff;
  font-size: 12px;
  font-weight: bold;
  line-height: 14px;
}
.rail nav {
  display: flex;
  flex-direction: column;
  gap: 18px;
}
.rail nav a {
  display: flex;
  align-items: center;
  justify-content: center;
  width: 31px;
  height: 32px;
  border-radius: 2px;
}
.rail nav a.on {
  background-color: #222f68;
  color: #fff;
}
.rail nav svg {
  width: 12px;
  height: 12px;
}
.rail hr {
  width: 22px;
  margin: 22px 0 21px;
  border: none;
  border-top: 1px solid #5767a0;
}

/* top bar */
.page {
  display: flex;
  flex: 1;
  flex-direction: column;
  min-width: 0;
}
.topbar {
  display: flex;
  flex: none;
  align-items: center;
  height: 33px;
  padding: 0 6px;
  background-color: #f2f2f8;
}
.badge {
  width: 26px;
  border-radius: 2px;
  background-color: #5a5cf0;
  color: #fff;
  font-weight: bold;
  line-height: 26px;
  text-align: center;
}
h1 {
  margin: 0 18px 0 4px;
  font-size: 15px;
  font-weight: normal;
}
.topbar label {
  font-size: 10px;
}
.select {
  display: grid;
  align-items: center;
  background-color: #fff;
}
.select select, .select svg {
  grid-area: 1 / 1;
}
.select select {
  width: 100%;
  height: 100%;
  border: none;
  background: none;
  appearance: none;
}
.select svg {
  justify-self: end;
  pointer-events: none;
}
.engine {
  width: 37px;
  height: 19px;
  margin: 0 22px 0 10px;
  font-size: 9px;
}
.engine select {
  padding-left: 4px;
}
.engine svg {
  width: 6px;
  height: 6px;
  margin-right: 3px;
}
.views {
  display: flex;
  align-self: stretch;
  gap: 8px;
  margin-left: auto;
  font-size: 8px;
}
.views a {
  display: flex;
  align-items: center;
  gap: 6px;
  height: 32px;
  padding: 0 8px;
  border-bottom: 3px solid transparent;
}
.views a.on {
  border-color: #5553e0;
}
.views svg {
  width: 12px;
  height: 12px;
}
.io {
  display: flex;
  gap: 7px;
  margin-left: auto;
}
.io button {
  gap: 3px;
  height: 16px;
  padding: 0 3px;
  border: 1px solid #8d85e0;
  border-radius: 2px;
  background-color: #fff;
  color: #4b3fc9;
  font-size: 9px;
}
.io svg {
  width: 8px;
  height: 8px;
}

/* prompts column */
.columns {
  display: flex;
  flex: 1;
  min-height: 0;
}
.left {
  position: relative;
  display: flex;
  flex: none;
  flex-direction: column;
  width: 25%;
  max-width: 307px;
  padding: 7px 11px 0 1px;
}
.tabs {
  display: flex;
  gap: 4px;
  padding-left: 5px;
}
.tabs button {
  flex: none;
  gap: 4px;
  height: 27px;
  padding: 0 11px;
  border: 1px solid #eeeff6;
  border-bottom: none;
}
.tabs svg {
  width: 12px;
  height: 12px;
}
.tabs .on, .stash-tabs .on, .data-tabs .on {
  z-index: 1;
  border-color: transparent;
  background-color: #fff;
  box-shadow: 0 1px 8px rgba(80, 80, 160, 0.35);
  clip-path: inset(0 -9px 0 -9px);
  color: #5350d6;
}
.tabs .on svg {
  color: #3a4482;
}
.prompts {
  flex: 1;
  border: 1px solid #efeff5;
  border-bottom: none;
}
.select-all {
  display: flex;
  align-items: center;
  height: 44px;
  padding-left: 16px;
  border-bottom: 1px solid #e8e8f0;
}
input[type="checkbox"] {
  display: block;
  width: 14px;
  height: 14px;
  border: 1px solid #d8d8e6;
  border-radius: 2px;
  background-color: #f5f5fb;
  appearance: none;
}
.select-all input[type="checkbox"] {
  width: 10px;
  height: 10px;
  border-color: #e7e7ef;
}
.select-all label {
  margin: 0 4px;
}
.delete {
  width: 19px;
  height: 19px;
  background-color: #f2f2f9;
}
.new {
  justify-content: flex-start;
  gap: 6px;
  width: 100%;
  height: 31px;
  padding-left: 16px;
  border-bottom: 1px solid #ececf3;
  color: #5350d6;
  font-size: 9px;
}
.new svg {
  width: 9px;
  height: 9px;
}
.prompt {
  display: flex;
  align-items: center;
  gap: 4px;
  height: 32px;
  padding-left: 16px;
  border-bottom: 1px solid #efeff5;
}
.prompt svg {
  width: 15px;
  height: 15px;
  padding: 3px 2px;
  background-color: #e8e9f8;
}
.collapse {
  position: absolute;
  top: 227px;
  right: -7px;
  z-index: 2;
  display: flex;
  flex-direction: column;
  gap: 4px;
}
.collapse button {
  width: 24px;
  height: 24px;
  border-radius: 50%;
  background-color: #fff;
  box-shadow: 0 0 4px rgba(60, 60, 110, 0.4);
}
.collapse svg {
  width: 8px;
  height: 8px;
}

/* data column */
.right {
  display: flex;
  flex: 1;
  flex-direction: column;
  min-width: 0;
  padding: 8px 6px 6px 7px;
  background-color: #fbfbfe;
}
.stash-tabs {
  display: flex;
  gap: 9px;
  padding-left: 6px;
}
.stash-tabs .on {
  gap: 3px;
  height: 32px;
  padding: 0 12px;
}
.count {
  width: 17px;
  border-radius: 50%;
  background-color: #f1f1fa;
  line-height: 17px;
}
.add svg {
  width: 11px;
  height: 11px;
}
.stash {
  border: 1px solid #efeff6;
  background-color: #fff;
}
.stash-tools {
  display: flex;
  align-items: center;
  gap: 6px;
  height: 28px;
  padding-left: 8px;
  border-bottom: 1px solid #efeff6;
}
.stash-tools .plain {
  margin-right: 7px;
}
.stash-tools .plain svg {
  width: 8px;
  height: 8px;
}
.small {
  gap: 3px;
  height: 16px;
  padding: 0 3px;
  border: 1px solid #b3b8d2;
  border-radius: 2px;
  background-color: #f1f2fa;
  color: #6f77a6;
  font-size: 9px;
}
.small svg {
  width: 9px;
  height: 9px;
}
.stash p {
  border-bottom: 1px solid #f3f3f8;
  font-size: 10px;
  line-height: 31px;
  text-align: center;
}
.stash input {
  display: block;
  width: 100%;
  height: 20px;
  padding: 0 12px;
  border: none;
  background: none;
  font-size: 11px;
}
::placeholder {
  color: #9a9fc0;
}
.data-tabs {
  display: flex;
  gap: 4px;
  margin-top: 16px;
  padding-left: 6px;
  border-bottom: 1px solid #efeff6;
}
.data-tabs button {
  gap: 13px;
  height: 27px;
  padding: 0 10px;
  border: 1px solid #f0f0f7;
  border-bottom: none;
}
.data-tabs svg {
  width: 11px;
  height: 11px;
  color: #8d90a6;
}
.scope {
  display: flex;
  align-items: center;
  gap: 5px;
  margin: 5px 0;
  font-size: 9px;
}
.what {
  padding: 0 6px;
  border: 1px solid #d9dae8;
  background-color: #f2f2f8;
  color: #26283c;
  line-height: 20px;
}
.filters {
  height: 22px;
  padding: 0 7px;
  border-radius: 2px;
  background-color: #97508a;
  color: #fff;
  font-size: 10px;
}
.group {
  display: flex;
  height: 22px;
  border: 1px solid #d9dae8;
  border-radius: 2px;
  background-color: #fff;
}
.group button {
  padding: 0 6px;
}
.group button + button {
  border-left: 1px solid #d9dae8;
}
.group svg {
  width: 8px;
  height: 8px;
}
.group .funnel {
  width: 13px;
  height: 13px;
}
.group .tint {
  padding: 0 3px;
  background-color: #eceef8;
}
.end {
  margin-left: auto;
}
.band {
  display: flex;
  align-items: flex-end;
  gap: 17px;
  padding: 4px 3px 3px;
  background-color: #f2f2f8;
}
.field {
  display: flex;
  flex-direction: column;
  gap: 2px;
  font-size: 9px;
  line-height: 12px;
}
.search {
  width: 142px;
}
.box {
  display: flex;
  align-items: center;
  gap: 5px;
  height: 22px;
  padding: 0 6px;
  border: 1px solid #d9dae8;
  border-radius: 2px;
  background-color: #fff;
}
.box svg {
  width: 12px;
  height: 12px;
}
.box input {
  width: 100%;
  min-width: 0;
  border: none;
  background: none;
  font-size: 11px;
}
.big {
  font-size: 10px;
}
.big button {
  padding: 0 7px;
}
.sort-row {
  display: flex;
  gap: 7px;
}
.order {
  width: 91px;
  height: 22px;
  border: 1px solid #d9dae8;
  border-radius: 2px;
}
.order select {
  padding-left: 6px;
}
.order svg {
  width: 27px;
  height: 20px;
  padding: 4px 7px;
  border-left: 1px solid #d9dae8;
}
.shuffle {
  width: 22px;
  height: 22px;
  border: 1px solid #d9dae8;
  border-radius: 2px;
  background-color: #fff;
}
.shuffle svg {
  width: 13px;
  height: 13px;
}
.group .pink {
  background-color: #efcfe7;
  color: #17171f;
}

/* utterances */
.list {
  display: flex;
  flex: 1;
  min-height: 0;
  margin-top: 6px;
  overflow: hidden;
  border: 1px solid #efeff6;
}
table {
  flex: 1;
  align-self: flex-start;
  width: 100%;
  min-width: 0;
  border-collapse: collapse;
  table-layout: fixed;
}
thead {
  background-color: #fff;
  box-shadow: 0 2px 3px rgba(80, 80, 140, 0.2);
}
th {
  height: 30px;
  font-size: 12px;
  font-weight: normal;
  text-align: left;
}
.c1 {
  width: 27px;
  padding-left: 5px;
}
.c1 svg {
  width: 14px;
  height: 11px;
  margin-bottom: 4px;
}
.c2 {
  width: 57px;
}
.c4 {
  width: 46px;
}
.c4 button {
  margin-left: 26px;
}
.c4 svg {
  width: 13px;
  height: 13px;
}
td {
  height: 30px;
  border-bottom: 1px solid #efeff6;
  font-size: 9px;
}
tr:nth-child(even) td {
  height: 31px;
}
td input[type="checkbox"] {
  margin-left: 5px;
}
.kind {
  display: flex;
  align-items: center;
  justify-content: center;
  width: 26px;
  height: 18px;
  border: 1px solid #e4e4ee;
  border-radius: 2px;
  background-color: #f4f4f9;
}
.kind svg {
  width: 9px;
  height: 9px;
}
.text {
  margin: 0 41px 0 3px;
  overflow: hidden;
  white-space: nowrap;
  mask-image: linear-gradient(90deg, #000 calc(100% - 28px), transparent);
}
.scrollbar {
  flex: none;
  width: 9px;
  margin-left: 3px;
  padding: 1px 2px;
  border-left: 1px solid #efeff6;
}
.scrollbar i {
  display: block;
  width: 4px;
  height: 11px;
  border-radius: 2px;
  background-color: #b9b9c0;
}

/* overlays */
.testing {
  position: absolute;
  right: 0;
  bottom: 10px;
  width: 19px;
  height: 63px;
  border-radius: 0 2px 2px 0;
  background-color: #4a3aea;
  color: #fff;
  font-size: 9px;
  writing-mode: vertical-rl;
  rotate: 180deg;
}
.share {
  position: absolute;
  bottom: 4px;
  left: 50%;
  display: flex;
  align-items: center;
  gap: 5px;
  height: 25px;
  margin-left: -142px;
  padding: 0 6px 0 4px;
  border: 1px solid #c9c9ce;
  background-color: #fff;
  box-shadow: 0 1px 6px rgba(0, 0, 0, 0.4);
  color: #222;
  font-family: Inter, sans-serif;
  font-size: 6px;
  white-space: nowrap;
}
.share .grip {
  color: #aaa;
}
.share button {
  height: 18px;
  padding: 0 8px;
  border-radius: 9px;
  background-color: #dedede;
  color: #444;
}
.share a {
  margin-left: 2px;
  color: #2f6fb5;
  text-decoration: underline;
}
.bubble {
  position: absolute;
  bottom: 18px;
  left: 10px;
  width: 28px;
  height: 28px;
  border-radius: 50%;
  background-color: #1d93d6;
}
.camera {
  position: absolute;
  bottom: 12px;
  left: 19px;
  width: 40px;
  height: 40px;
  border: 2px solid #888da6;
  border-radius: 50%;
  background-color: #1d1d1f;
}
.camera svg {
  width: 16px;
  height: 12px;
}
.recorder {
  position: absolute;
  bottom: 12px;
  left: 69px;
  display: flex;
  align-items: center;
  height: 39px;
  padding: 0 17px 0 12px;
  gap: 10px;
  border-radius: 20px;
  background-color: #1f1f21;
  color: #fff;
}
.recorder svg {
  width: 14px;
  height: 14px;
}
.stop {
  width: 27px;
  height: 27px;
  border-radius: 50%;
  background-color: #ee4c3a;
}
.stop i {
  width: 12px;
  height: 12px;
  border-radius: 2px;
  background-color: #fff;
}
.time {
  margin-left: 3px;
  font-family: Inter, sans-serif;
  font-weight: 600;
}
.sep {
  width: 1px;
  height: 22px;
  background-color: #3c3c40;
}
.cursor {
  position: absolute;
  top: 411px;
  left: 229px;
  width: 7px;
  height: 10px;
}
```
